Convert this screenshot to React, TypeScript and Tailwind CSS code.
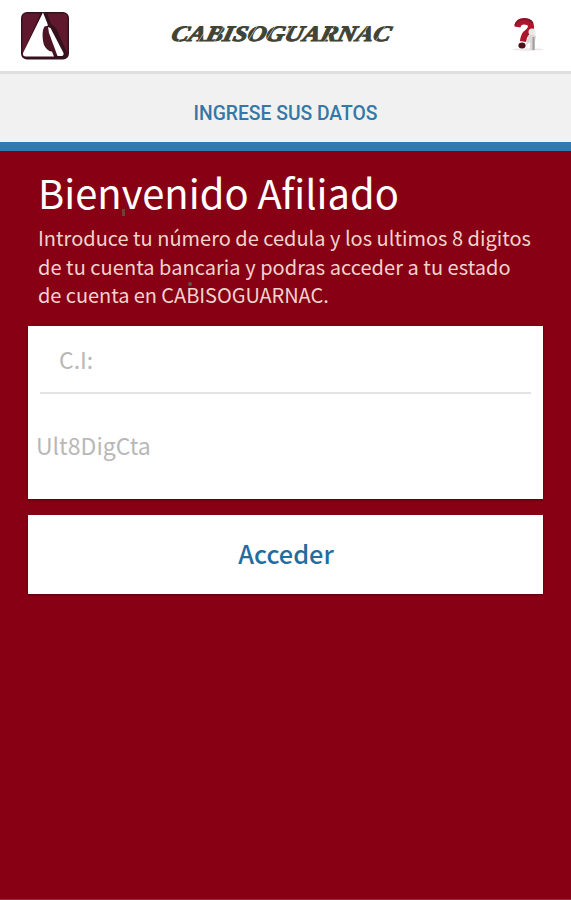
function Logo() {
  return (
    <svg width="50" height="50" viewBox="0 0 50 50" aria-label="Logo">
      <rect x="1" y="1" width="48" height="47.500" rx="6" fill="#35101d" />
      <rect x="2.5" y="2.5" width="45" height="44" rx="4" fill="#5f182d" />
      <path d="M21 1h6l4 12 5 4 12 27-4 3H5l-3-3z" fill="#35101d" />
      <path d="M23 1.5 3 42q-.5 3.500 3 3.500H34l-2-5c-6 0-9-8-9-17 0-4 1-8 5-9l-1-3z" fill="#fff" />
      <path d="M25 15c-3 3-3 12-1 19 2 4 5 6 8 5l2 5h6L29 17z" fill="#4c1425" />
      <path d="m28 16 2.500 1L43.500 42q.5 3-2 3H37.500L29 22z" fill="#fff" />
    </svg>
  );
}

function HelpIcon() {
  return (
    <svg width="42" height="42" viewBox="0 0 42 42" aria-label="Ayuda">
      <ellipse cx="23" cy="34.500" rx="16" ry="1.500" fill="#eeecec" />
      <path d="M12.500 12C13 8 15.500 6.500 19 6.500c5 0 7 2 7 5 0 4-3 5-5 7-2 2-2.500 4-3 8" fill="none" stroke="#ac162c" strokeWidth="6.200" />
      <path d="M10 10.500C11.500 6 15 4 19 4c4 0 7 1.500 8.500 4" fill="none" stroke="#82172a" strokeWidth="1.800" />
      <ellipse cx="17" cy="30.500" rx="3.600" ry="3" fill="#4b1019" />
      <circle cx="27" cy="17" r="3.500" fill="#eee9e9" />
      <path d="M23 21q4-3 8 0l-1 6v8h-5v-8l-4 3z" fill="#ded9d9" />
      <path d="M28.500 22v13" stroke="#a29c9c" strokeWidth="2" />
    </svg>
  );
}

function StencilCuts() {
  return (
    <svg className="absolute inset-0" width="222" height="28" viewBox="0 0 222 28" aria-hidden="true">
      <path
        d="m7 22 11-17M27 22 38 5M43 22 54 5M76 22 87 5M94 22l11-17M111 22l11-17M153 22l11-17M187 22l11-17M204 22l11-17"
        stroke="#fff"
        strokeWidth="0.8"
        opacity="0.65"
      />
    </svg>
  );
}

export default function App() {
  return (
    <div className="flex h-[900px] w-[571px] flex-col overflow-hidden border-b border-[#823540] bg-[#870014] font-['Noto_Sans_CJK_SC','Noto_Sans',sans-serif]">
      <header className="flex h-[71px] shrink-0 items-start justify-between bg-white pt-[11px] pr-[24px] pl-[20px]">
        <Logo />
        <h1 className="relative mt-[9px] mr-[11px] flex h-7 w-[222px] items-center justify-center font-['Liberation_Serif',serif] text-[22px] leading-7 font-bold text-[#414334] italic">
          <span className="inline-block scale-x-[1.17] -skew-x-12 [-webkit-text-stroke:1px_#414334]">CABISOGUARNAC</span>
          <StencilCuts />
        </h1>
        <div className="mt-[4px]"><HelpIcon /></div>
      </header>
      <div className="flex h-[80px] shrink-0 items-center justify-center border-t-[3px] border-b-[9px] border-t-[#dfdfdf] border-b-[#3279b2] bg-[#f1f1f1] pt-[12px]">
        <span className="font-[Roboto,sans-serif] text-[19.3px] leading-6 font-medium text-[#3478a8]">INGRESE SUS DATOS</span>
      </div>
      <main className="flex flex-col px-[28px]">
        <h2 className="mt-[19px] ml-[10px] text-[39.9px] leading-[44px] whitespace-nowrap text-white">
          Bie<span className="relative">n<i className="absolute -right-[3px] bottom-[4px] h-[7px] w-[3px] bg-[#6c4338]" /></span>venido Afiliado
        </h2>
        <p className="mt-[10px] ml-[10px] text-[20px] leading-[28.5px] whitespace-nowrap text-[#f1d3cf]">
          Introduce tu número de cedula y los ultimos 8 digitos<br />
          <span className="tracking-[0.04px]">de tu cuenta bancaria y podras acceder a tu estado</span><br />
          <span className="tracking-[-0.06px]">de cuenta en CA<span className="relative">B<i className="absolute top-[2px] left-[2px] h-[4px] w-[4px] rounded-full bg-[#59574b]" /></span>ISOGUARNAC.</span>
        </p>
        <form className="mt-[16px] flex flex-col gap-[16px]">
          <div className="flex h-[173px] flex-col bg-white shadow-[0_1px_2px_#50000c]">
            <input aria-label="C.I:" placeholder="C.I:" className="mx-[12px] h-[68px] border-b-2 border-[#e3e3e3] px-[19px] text-[23px] outline-none placeholder:text-[#b8b8b8]" />
            <input aria-label="Ult8DigCta" placeholder="Ult8DigCta" className="h-[103px] px-[8px] text-[23px] outline-none placeholder:text-[#b8b8b8]" />
          </div>
          <button type="button" className="h-[79px] bg-white pl-[1px] text-[25.3px] font-medium text-[#226d9e] shadow-[0_1px_2px_#50000c]">Acceder</button>
        </form>
      </main>
    </div>
  );
}
